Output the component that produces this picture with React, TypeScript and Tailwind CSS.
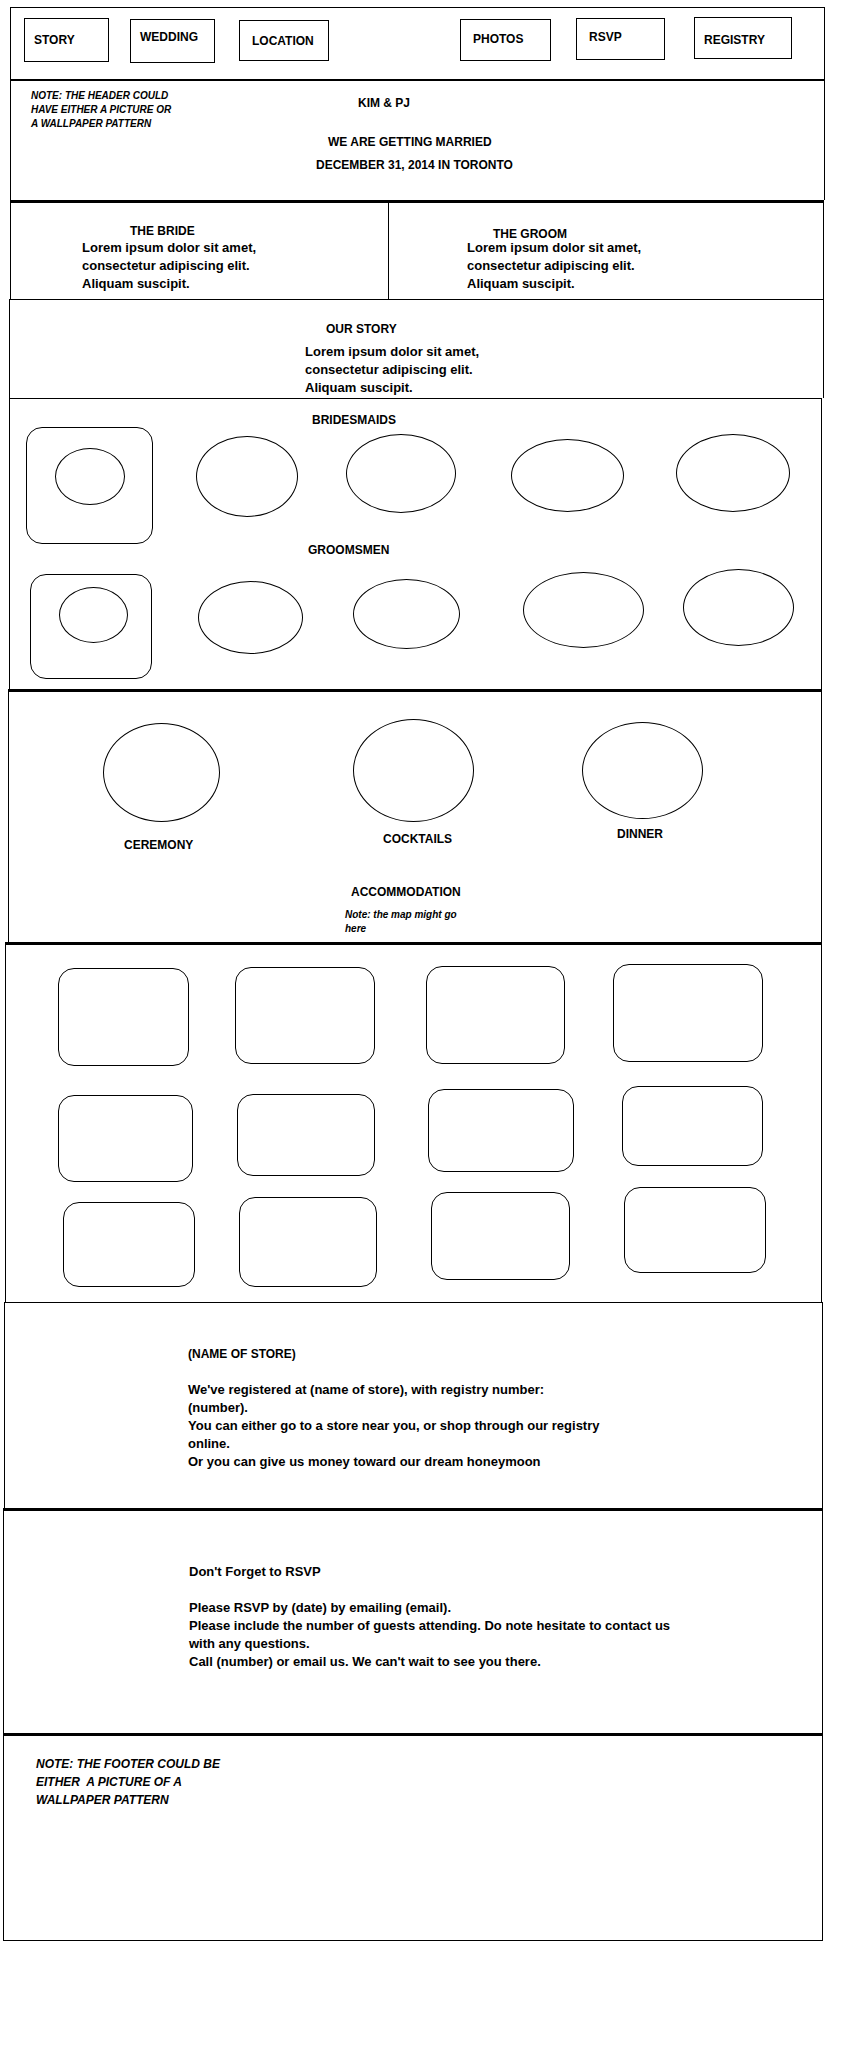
import React from 'react';

// --- DATA ---
const navItems = [
  { label: 'STORY', box: 'ml-[13px] mt-[10px] w-[85px] h-[44px] pl-[9px] pt-[14px]' },
  { label: 'WEDDING', box: 'ml-[21px] mt-[11px] w-[85px] h-[44px] pl-[9px] pt-[10px]' },
  { label: 'LOCATION', box: 'ml-[24px] mt-[12px] w-[90px] h-[41px] pl-[12px] pt-[13px]' },
  { label: 'PHOTOS', box: 'ml-[131px] mt-[11px] w-[91px] h-[42px] pl-[12px] pt-[12px]' },
  { label: 'RSVP', box: 'ml-[25px] mt-[10px] w-[89px] h-[42px] pl-[12px] pt-[11px]' },
  { label: 'REGISTRY', box: 'ml-[29px] mt-[9px] w-[98px] h-[42px] pl-[9px] pt-[15px]' },
];

const bridesmaids = [
  'ml-[43px] mt-[9px] w-[102px] h-[81px]',
  'ml-[48px] mt-[7px] w-[110px] h-[79px]',
  'ml-[55px] mt-[12px] w-[113px] h-[73px]',
  'ml-[52px] mt-[7px] w-[114px] h-[78px]',
];

const groomsmen = [
  'ml-[46px] mt-[12px] w-[105px] h-[73px]',
  'ml-[50px] mt-[10px] w-[107px] h-[70px]',
  'ml-[63px] mt-[3px] w-[121px] h-[76px]',
  'ml-[39px] mt-0 w-[111px] h-[77px]',
];

const venues = [
  { label: 'CEREMONY', col: 'ml-[94px]', oval: 'mt-[31px] w-[117px] h-[99px]', text: 'mt-[16px] ml-[21px]' },
  { label: 'COCKTAILS', col: 'ml-[133px]', oval: 'mt-[27px] w-[121px] h-[103px]', text: 'mt-[10px] ml-[30px]' },
  { label: 'DINNER', col: 'ml-[108px]', oval: 'mt-[30px] w-[121px] h-[97px]', text: 'mt-[8px] ml-[35px]' },
];

const photoRows = [
  {
    row: 'mt-[19px]',
    items: [
      'ml-[52px] mt-[4px] w-[131px] h-[98px]',
      'ml-[46px] mt-[3px] w-[140px] h-[97px]',
      'ml-[51px] mt-[2px] w-[139px] h-[98px]',
      'ml-[48px] mt-0 w-[150px] h-[98px]',
    ],
  },
  {
    row: 'mt-[20px]',
    items: [
      'ml-[52px] mt-[9px] w-[135px] h-[87px]',
      'ml-[44px] mt-[8px] w-[138px] h-[82px]',
      'ml-[53px] mt-[3px] w-[146px] h-[83px]',
      'ml-[48px] mt-0 w-[141px] h-[80px]',
    ],
  },
  {
    row: 'mt-[5px]',
    items: [
      'ml-[57px] mt-[15px] w-[132px] h-[85px]',
      'ml-[44px] mt-[10px] w-[138px] h-[90px]',
      'ml-[54px] mt-[5px] w-[139px] h-[88px]',
      'ml-[54px] mt-0 w-[142px] h-[86px]',
    ],
  },
];

const Oval = ({ className }: { className: string }) => (
  <div className={`shrink-0 rounded-[50%] border border-black ${className}`} />
);

const Lorem = ({ className }: { className: string }) => (
  <p className={`text-[13px] leading-[18px] font-bold ${className}`}>
    Lorem ipsum dolor sit amet,
    <br />
    consectetur adipiscing elit.
    <br />
    Aliquam suscipit.
  </p>
);

export default function App() {
  return (
    <div className="w-[844px] h-[2051px] bg-white pt-[7px] text-black font-['Liberation_Sans',Arial,sans-serif] font-bold">
      {/* --- NAV --- */}
      <nav className="ml-[10px] w-[815px] h-[72px] border border-b-0 border-black flex items-start">
        {navItems.map((item) => (
          <div key={item.label} className={`shrink-0 border border-black text-[12px] leading-[14px] ${item.box}`}>
            {item.label}
          </div>
        ))}
      </nav>

      {/* --- HEADER --- */}
      <header className="ml-[10px] w-[815px] h-[121px] border-x border-t-2 border-black">
        <div className="flex items-start">
          <p className="ml-[20px] mt-[8px] w-[160px] shrink-0 text-[10px] leading-[14px] italic">
            NOTE: THE HEADER COULD
            <br />
            HAVE EITHER A PICTURE OR
            <br />
            A WALLPAPER PATTERN
          </p>
          <h1 className="ml-[167px] mt-[15px] text-[12px] leading-[14px]">KIM &amp; PJ</h1>
        </div>
        <p className="ml-[317px] mt-[4px] text-[12px] leading-[14px]">WE ARE GETTING MARRIED</p>
        <p className="ml-[305px] mt-[9px] text-[12px] leading-[14px]">DECEMBER 31, 2014 IN TORONTO</p>
      </header>

      {/* --- BRIDE & GROOM --- */}
      <section className="ml-[10px] w-[814px] h-[99px] border-x border-t-[3px] border-black flex">
        <div className="w-[378px] shrink-0 border-r border-black">
          <h2 className="ml-[119px] mt-[21px] text-[12px] leading-[14px]">THE BRIDE</h2>
          <Lorem className="ml-[71px] mt-[1px]" />
        </div>
        <div className="flex-1">
          <h2 className="ml-[104px] mt-[24px] text-[12px] leading-[14px]">THE GROOM</h2>
          <Lorem className="ml-[78px] mt-[-2px]" />
        </div>
      </section>

      {/* --- OUR STORY --- */}
      <section className="ml-[9px] w-[815px] h-[99px] border-x border-t border-black">
        <h2 className="ml-[316px] mt-[22px] text-[12px] leading-[14px]">OUR STORY</h2>
        <Lorem className="ml-[295px] mt-[7px]" />
      </section>

      {/* --- WEDDING PARTY --- */}
      <section className="ml-[9px] w-[813px] h-[291px] border-x border-t border-black">
        <h2 className="ml-[302px] mt-[14px] text-[12px] leading-[14px]">BRIDESMAIDS</h2>
        <div className="flex items-start">
          <div className="ml-[16px] w-[127px] h-[117px] shrink-0 rounded-[16px] border border-black">
            <Oval className="ml-[28px] mt-[20px] w-[70px] h-[57px]" />
          </div>
          {bridesmaids.map((cls) => (
            <Oval key={cls} className={cls} />
          ))}
        </div>
        <h2 className="ml-[298px] mt-[-1px] text-[12px] leading-[14px]">GROOMSMEN</h2>
        <div className="mt-[12px] flex items-start">
          <div className="ml-[20px] mt-[5px] w-[122px] h-[105px] shrink-0 rounded-[16px] border border-black">
            <Oval className="ml-[28px] mt-[12px] w-[69px] h-[56px]" />
          </div>
          {groomsmen.map((cls) => (
            <Oval key={cls} className={cls} />
          ))}
        </div>
      </section>

      {/* --- LOCATIONS --- */}
      <section className="ml-[8px] w-[814px] h-[253px] border-x border-t-[3px] border-black">
        <div className="flex items-start">
          {venues.map((v) => (
            <div key={v.label} className={`flex flex-col shrink-0 ${v.col}`}>
              <Oval className={v.oval} />
              <span className={`text-[12px] leading-[14px] ${v.text}`}>{v.label}</span>
            </div>
          ))}
        </div>
        <h2 className="ml-[342px] mt-[33px] text-[12px] leading-[14px]">ACCOMMODATION</h2>
        <p className="ml-[336px] mt-[9px] text-[10px] leading-[14px] italic">
          Note: the map might go
          <br />
          here
        </p>
      </section>

      {/* --- PHOTOS --- */}
      <section className="ml-[5px] w-[817px] h-[360px] border-x border-t-[3px] border-black">
        {photoRows.map((r, i) => (
          <div key={i} className={`flex items-start ${r.row}`}>
            {r.items.map((cls) => (
              <div key={cls} className={`shrink-0 rounded-[16px] border border-black ${cls}`} />
            ))}
          </div>
        ))}
      </section>

      {/* --- REGISTRY --- */}
      <section className="ml-[4px] w-[819px] h-[206px] border-x border-t border-black">
        <div className="ml-[183px] mt-[42px] text-[13px] leading-[18px]">
          <p className="text-[12px]">(NAME OF STORE)</p>
          <p className="mt-[18px]">
            We've registered at (name of store), with registry number:
            <br />
            (number).
            <br />
            You can either go to a store near you, or shop through our registry
            <br />
            online.
            <br />
            Or you can give us money toward our dream honeymoon
          </p>
        </div>
      </section>

      {/* --- RSVP --- */}
      <section className="ml-[3px] w-[820px] h-[225px] border-x border-t-[3px] border-black">
        <div className="ml-[185px] mt-[52px] text-[13px] leading-[18px]">
          <p>Don't Forget to RSVP</p>
          <p className="mt-[18px]">
            Please RSVP by (date) by emailing (email).
            <br />
            Please include the number of guests attending. Do note hesitate to contact us
            <br />
            with any questions.
            <br />
            Call (number) or email us. We can't wait to see you there.
          </p>
        </div>
      </section>

      {/* --- FOOTER --- */}
      <footer className="ml-[3px] w-[820px] h-[208px] border border-t-[3px] border-black">
        <p className="ml-[32px] mt-[19px] text-[12px] leading-[18px] italic whitespace-pre">
          {'NOTE: THE FOOTER COULD BE\nEITHER  A PICTURE OF A\nWALLPAPER PATTERN'}
        </p>
      </footer>
    </div>
  );
}
